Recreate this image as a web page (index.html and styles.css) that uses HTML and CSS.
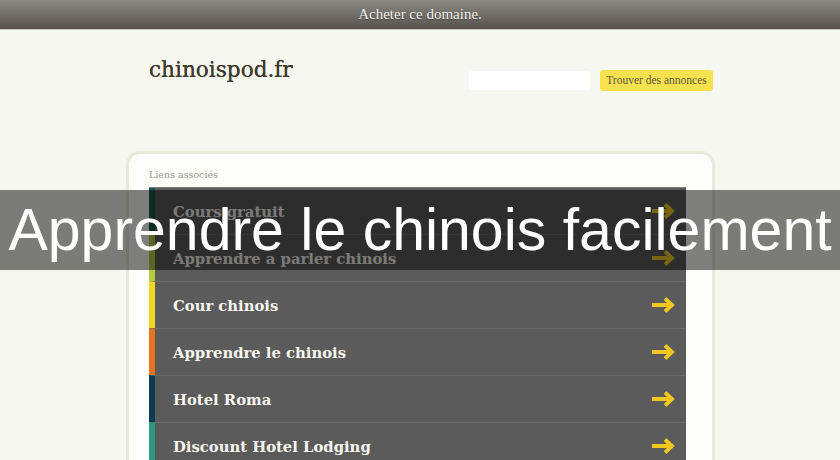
FILE: index.html
```html
<!DOCTYPE html>
<html lang="fr">
<head>
<meta charset="utf-8">
<title>chinoispod.fr</title>
<link rel="stylesheet" href="styles.css">
</head>
<body>
<div class="topbar">Acheter ce domaine.</div>
<div class="container">
  <div class="header">
    <div class="logo">chinoispod.fr</div>
    <div class="search">
      <div class="search-input"></div>
      <div class="search-btn">Trouver des annonces</div>
    </div>
  </div>
  <div class="card">
    <div class="label">Liens associés</div>
    <div class="list">
      <div class="row c1"><span class="txt">Cours gratuit</span><svg class="arrow" viewBox="0 0 26 18"><path d="M2 9H21.5M15 2.5L22 9L15 15.5"/></svg></div>
      <div class="row c2"><span class="txt">Apprendre a parler chinois</span><svg class="arrow" viewBox="0 0 26 18"><path d="M2 9H21.5M15 2.5L22 9L15 15.5"/></svg></div>
      <div class="row c3"><span class="txt">Cour chinois</span><svg class="arrow" viewBox="0 0 26 18"><path d="M2 9H21.5M15 2.5L22 9L15 15.5"/></svg></div>
      <div class="row c4"><span class="txt">Apprendre le chinois</span><svg class="arrow" viewBox="0 0 26 18"><path d="M2 9H21.5M15 2.5L22 9L15 15.5"/></svg></div>
      <div class="row c5"><span class="txt">Hotel Roma</span><svg class="arrow" viewBox="0 0 26 18"><path d="M2 9H21.5M15 2.5L22 9L15 15.5"/></svg></div>
      <div class="row c6"><span class="txt">Discount Hotel Lodging</span><svg class="arrow" viewBox="0 0 26 18"><path d="M2 9H21.5M15 2.5L22 9L15 15.5"/></svg></div>
    </div>
  </div>
</div>
<div class="overlay">Apprendre le chinois facilement</div>
</body>
</html>
```
FILE: styles.css
```css
html, body {
  margin: 0;
  padding: 0;
}
body {
  background: #f7f7f1;
  width: 840px;
  height: 460px;
  overflow: hidden;
  position: relative;
}
.topbar {
  height: 29px;
  line-height: 29px;
  background: linear-gradient(to bottom, #8c8884 0%, #6f6b66 55%, #56514c 100%);
  border-bottom: 1px solid #cdcbc2;
  text-align: center;
  color: #f2efea;
  font-family: "Liberation Serif", serif;
  font-size: 15px;
  text-shadow: 0 1px 1px rgba(0,0,0,0.35);
}
.container {
  width: 590px;
  margin: 0 auto;
}
.header {
  box-sizing: border-box;
  height: 121px;
  padding: 27px 2px 0 24px;
  display: flex;
  justify-content: space-between;
  align-items: flex-start;
}
.logo {
  font-family: "DejaVu Serif", serif;
  font-size: 21.6px;
  line-height: 26px;
  color: #40382a;
  text-shadow: 0 0 0.4px #40382a;
}
.search {
  display: flex;
  align-items: center;
  gap: 10px;
  margin-top: 13px;
}
.search-input {
  width: 121px;
  height: 19px;
  background: #ffffff;
  border-radius: 3px;
}
.search-btn {
  box-sizing: border-box;
  width: 113px;
  height: 21px;
  background: #f6e24f;
  border-radius: 3px;
  font-family: "Liberation Serif", serif;
  font-size: 11.5px;
  line-height: 21px;
  color: #5a5640;
  text-align: center;
}
.card {
  box-sizing: border-box;
  height: 400px;
  margin-left: 1px;
  border: 3px solid #e8e9d9;
  border-radius: 14px;
  background: #fdfdf9;
  padding: 15px 26px 0 20px;
}
.label {
  font-family: "DejaVu Serif", serif;
  font-size: 9.5px;
  line-height: 12px;
  color: #9a9a94;
  margin-bottom: 6px;
}
.list {
  border-top: 1px solid #7c7c7c;
}
.row {
  box-sizing: border-box;
  height: 47px;
  display: flex;
  align-items: center;
  justify-content: space-between;
  background: #5b5b5b;
  border-left: 6px solid #555;
  border-top: 1px solid #6a6a6a;
  padding: 0 10px 0 18px;
}
.row:first-child {
  border-top: none;
  height: 46px;
}
.txt {
  font-family: "DejaVu Serif", serif;
  font-weight: bold;
  font-size: 14.8px;
  color: #f6f5ee;
}
.arrow {
  width: 26px;
  height: 18px;
  fill: none;
  stroke: #f3c81e;
  stroke-width: 3.8;
  stroke-linecap: butt;
  stroke-linejoin: miter;
}
.c1 { border-left-color: #17584a; }
.c2 { border-left-color: #b4cc3e; }
.c3 { border-left-color: #f2d620; }
.c4 { border-left-color: #e8731f; }
.c5 { border-left-color: #0d3c51; }
.c6 { border-left-color: #2b9a82; }
.overlay {
  position: absolute;
  left: 0;
  right: 0;
  top: 190px;
  height: 80px;
  line-height: 80px;
  background: rgba(0,0,0,0.5);
  color: #ffffff;
  text-align: center;
  font-family: "Liberation Sans", Arial, sans-serif;
  font-size: 59px;
  white-space: nowrap;
}
```
